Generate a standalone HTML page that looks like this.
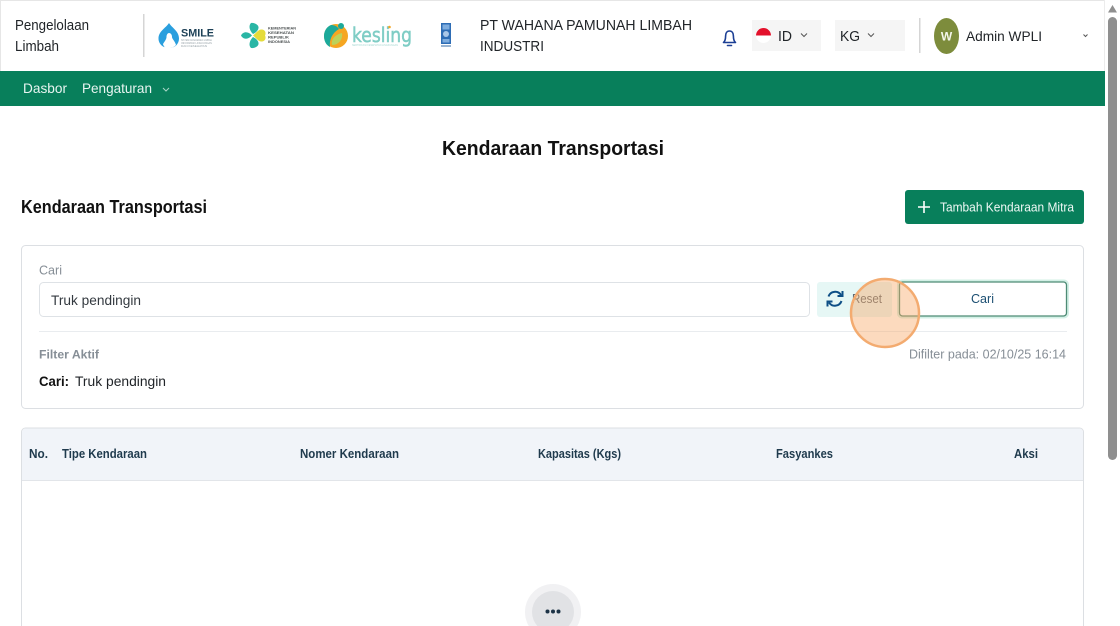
<!DOCTYPE html>
<html lang="id"><head><meta charset="utf-8"><title>Kendaraan Transportasi</title>
<style>
html,body{margin:0;padding:0;width:1120px;height:626px;overflow:hidden;background:#fff}
svg{display:block;position:absolute;left:0;top:0}
text{font-family:"Liberation Sans",sans-serif}
</style></head><body>
<svg width="1120" height="626" viewBox="0 0 1120 626" xmlns="http://www.w3.org/2000/svg">
<defs><filter id="soft" x="-5%" y="-5%" width="110%" height="110%"><feGaussianBlur stdDeviation="0.35"/></filter></defs>
<rect width="1120" height="626" fill="#fff"/>
<!-- header -->
<rect x="0" y="0" width="1105" height="1" fill="#e6e6e6"/>
<rect x="0" y="0" width="1" height="71" fill="#e6e6e6"/>
<rect x="1104" y="0" width="1" height="71" fill="#ececec"/>
<rect x="0" y="71" width="1105" height="35" fill="#087f5b"/>
<text x="15" y="30" font-size="14.5" fill="#212529" textLength="74" lengthAdjust="spacingAndGlyphs">Pengelolaan</text>
<text x="15" y="51" font-size="14.5" fill="#212529" textLength="44" lengthAdjust="spacingAndGlyphs">Limbah</text>
<rect x="143" y="14" width="1.5" height="43" fill="#d5d5d5"/>
<g filter="url(#soft)">
<!-- SMILE logo -->
<path d="M169 23 C172 28 179 31 179 38.500 C179 44 175 48 169 48 C163 48 158.500 44 158.500 38.500 C158.500 31 166 28 169 23Z" fill="#2a9fde"/>
<path d="M169 33 C171 33 172 35 172 37 C172 39 175 41 176 45 C174 47 172 48 170 48 L165 48 C164 46 163 45 163 44 C165 41 166.500 39 166.500 37 C166.500 35 167.500 33 169 33Z" fill="#fff"/>
<text x="181" y="36.500" font-size="11" font-weight="700" fill="#1d3f56" textLength="33" lengthAdjust="spacingAndGlyphs">SMILE</text>
<text x="181" y="41" font-size="2.600" fill="#9aa5ab" textLength="31" lengthAdjust="spacingAndGlyphs">SISTEM MANAJEMEN LIMBAH</text>
<text x="181" y="44" font-size="2.600" fill="#9aa5ab" textLength="31" lengthAdjust="spacingAndGlyphs">INFORMASI LINGKUNGAN</text>
<text x="181" y="47" font-size="2.600" fill="#9aa5ab" textLength="26" lengthAdjust="spacingAndGlyphs">DAN KESEHATAN</text>
<!-- Kemenkes logo -->
<path d="M251 23 C255 22.500 259 25 258.500 28 C258 31 255 33 253 34 C250 31 248 26 251 23Z" fill="#2cb6a5"/>
<path d="M251 48 C255 48.500 259 46 258.500 43 C258 40 255 38 253 37 C250 40 248 45 251 48Z" fill="#2cb6a5"/>
<path d="M241 35.500 C243 31.500 248 31 252 35.500 C248 40 243 39.500 241 35.500Z" fill="#2cb6a5"/>
<path d="M253 35.500 C256 33 258 30 261 29.500 C265 29 266.500 33 265 35.500 C266.500 38 265 42 261 41.500 C258 41 256 38 253 35.500Z" fill="#e5dc3a"/>
<text x="268" y="29.500" font-size="3.600" font-weight="700" fill="#4a4f50" textLength="28" lengthAdjust="spacingAndGlyphs">KEMENTERIAN</text>
<text x="268" y="34" font-size="3.600" font-weight="700" fill="#4a4f50" textLength="26" lengthAdjust="spacingAndGlyphs">KESEHATAN</text>
<text x="268" y="38.500" font-size="3.600" font-weight="700" fill="#4a4f50" textLength="21" lengthAdjust="spacingAndGlyphs">REPUBLIK</text>
<text x="268" y="43" font-size="3.600" font-weight="700" fill="#4a4f50" textLength="22" lengthAdjust="spacingAndGlyphs">INDONESIA</text>
<!-- kesling logo -->
<circle cx="336" cy="36" r="12" fill="#f5a623"/>
<path d="M331 25 C326 27 324 32 324 36 C324 41 326 45 330 47 C329 40 332 33 339 29 C337 26 334 25 331 25Z" fill="#1aa99a"/>
<path d="M332 45 C331 40 334 35 342 33 C343 39 339 45 332 45Z" fill="#bcd25a"/>
<circle cx="341" cy="26" r="3" fill="#1aa99a"/>
<text x="352" y="42" font-size="20" font-family="DejaVu Sans" fill="#7fcdc5" stroke="#7fcdc5" stroke-width=".5" textLength="60" lengthAdjust="spacingAndGlyphs" style='font-family:"DejaVu Sans",sans-serif'>kesling</text>
<circle cx="389.500" cy="27" r="1.300" fill="#f5a623"/>
<text x="352" y="46" font-size="2.400" fill="#a8d8d3" textLength="46" lengthAdjust="spacingAndGlyphs">SERTIFIKASI KESEHATAN LINGKUNGAN</text>
<!-- UNDP -->
<rect x="441" y="23" width="10" height="21" fill="#2d6db5"/>
<rect x="442.500" y="24.500" width="7" height="5" fill="#7fadde"/>
<circle cx="446" cy="34" r="3" fill="#a9c7e8"/>
<rect x="442.500" y="39" width="7" height="3.500" fill="#7fadde"/>
<rect x="441" y="45" width="10" height="2" fill="#9ab5d2"/>
</g>
<text x="480" y="30" font-size="14.500" fill="#212529" textLength="212" lengthAdjust="spacingAndGlyphs">PT WAHANA PAMUNAH LIMBAH</text>
<text x="480" y="51" font-size="14.500" fill="#212529" textLength="64" lengthAdjust="spacingAndGlyphs">INDUSTRI</text>
<!-- bell -->
<path d="M723.500 42.500 C725.300 41 725.600 39 725.600 36 C725.600 33 727 31 729.500 31 C732 31 733.400 33 733.400 36 C733.400 39 733.700 41 735.500 42.500 Z" fill="none" stroke="#1c3f94" stroke-width="1.600" stroke-linejoin="round"/>
<path d="M727.500 45.500 H731.500" stroke="#1c3f94" stroke-width="1.600" stroke-linecap="round"/>
<!-- ID chip -->
<rect x="752" y="20" width="69" height="31" fill="#f5f5f5"/>
<circle cx="763.500" cy="35.500" r="7.500" fill="#fff"/>
<path d="M756 35.500 A7.500 7.500 0 0 1 771 35.500Z" fill="#e3112b"/>
<text x="778" y="41" font-size="14.500" fill="#212529" textLength="14" lengthAdjust="spacingAndGlyphs">ID</text>
<path d="M801 33.500 L804 36.500 L807 33.500" fill="none" stroke="#555" stroke-width="1"/>
<!-- KG chip -->
<rect x="835" y="20" width="70" height="31" fill="#f5f5f5"/>
<text x="840" y="41" font-size="14.500" fill="#212529" textLength="20" lengthAdjust="spacingAndGlyphs">KG</text>
<path d="M868 33.500 L871 36.500 L874 33.500" fill="none" stroke="#555" stroke-width="1"/>
<rect x="919" y="18" width="1.500" height="35" fill="#d5d5d5"/>
<!-- avatar -->
<ellipse cx="946.500" cy="36" rx="12.500" ry="18" fill="#7d8c3c"/>
<text x="946.500" y="40.500" font-size="12" font-weight="700" fill="#f4f6ea" text-anchor="middle">W</text>
<text x="966" y="41" font-size="14" fill="#212529" textLength="76" lengthAdjust="spacingAndGlyphs">Admin WPLI</text>
<path d="M1083.500 34.500 L1085.500 36.500 L1087.500 34.500" fill="none" stroke="#555" stroke-width="1"/>
<!-- nav -->
<text x="23" y="93" font-size="14" fill="#e8f5f1" textLength="44" lengthAdjust="spacingAndGlyphs">Dasbor</text>
<text x="82" y="93" font-size="14" fill="#e8f5f1" textLength="70" lengthAdjust="spacingAndGlyphs">Pengaturan</text>
<path d="M163 88 L166 91 L169 88" fill="none" stroke="#a9d6c7" stroke-width="1"/>
<!-- titles -->
<text x="442" y="155" font-size="20" font-weight="700" fill="#111" textLength="222" lengthAdjust="spacingAndGlyphs">Kendaraan Transportasi</text>
<text x="21" y="213" font-size="18" font-weight="700" fill="#111" textLength="186" lengthAdjust="spacingAndGlyphs">Kendaraan Transportasi</text>
<rect x="905" y="190" width="179" height="34" rx="3" fill="#087f5b"/>
<path d="M924 201 V213 M918 207 H930" stroke="#fff" stroke-width="1.600" fill="none"/>
<text x="940" y="211.500" font-size="12.500" fill="#eef8f5" textLength="134" lengthAdjust="spacingAndGlyphs">Tambah Kendaraan Mitra</text>
<!-- filter card -->
<rect x="21.500" y="245.500" width="1062" height="163" rx="4" fill="#fff" stroke="#dcdfe3"/>
<text x="39" y="274.500" font-size="12.500" fill="#868e96" textLength="23" lengthAdjust="spacingAndGlyphs">Cari</text>
<rect x="39.500" y="282.500" width="770" height="34" rx="4" fill="#fff" stroke="#dee2e6"/>
<text x="51" y="305" font-size="14" fill="#343a40" textLength="90" lengthAdjust="spacingAndGlyphs">Truk pendingin</text>
<rect x="817" y="282" width="75" height="35" rx="3" fill="#e6f7f5"/>
<path d="M828.500 296.500 A7 7 0 0 1 841 295 M842.500 291 V296 H837.500 M841.500 301 A7 7 0 0 1 829 302.500 M827.500 306.500 V301.500 H832.500" fill="none" stroke="#0e4f86" stroke-width="2"/>
<text x="852" y="303" font-size="12.500" fill="#5f6b72" textLength="30" lengthAdjust="spacingAndGlyphs">Reset</text>
<rect x="898" y="280.500" width="170" height="37" rx="4" fill="none" stroke="#d3f0e6" stroke-width="2"/>
<rect x="899.500" y="282" width="167" height="34" rx="3" fill="#fff" stroke="#4d8b75" stroke-width="1.300"/>
<text x="971" y="303" font-size="12.500" fill="#1c4f72" textLength="23" lengthAdjust="spacingAndGlyphs">Cari</text>
<rect x="39" y="331" width="1028" height="1" fill="#e9ecef"/>
<text x="39" y="358.500" font-size="12" font-weight="700" fill="#868e96" textLength="60" lengthAdjust="spacingAndGlyphs">Filter Aktif</text>
<text x="909" y="358.500" font-size="12.500" fill="#868e96" textLength="157" lengthAdjust="spacingAndGlyphs">Difilter pada: 02/10/25 16:14</text>
<text x="39" y="386" font-size="14" font-weight="700" fill="#111" textLength="30" lengthAdjust="spacingAndGlyphs">Cari:</text>
<text x="75" y="386" font-size="14" fill="#212529" textLength="91" lengthAdjust="spacingAndGlyphs">Truk pendingin</text>
<!-- table -->
<path d="M21.500 626 V432 A4 4 0 0 1 25.500 428 H1079.500 A4 4 0 0 1 1083.500 432 V626" fill="#fff" stroke="#dcdfe3"/>
<path d="M22 480 V432 A4 4 0 0 1 26 428.500 H1079 A4 4 0 0 1 1083 432 V480Z" fill="#f1f4f9"/>
<rect x="22" y="480" width="1061" height="1" fill="#e2e5e9"/>
<g font-size="12.500" font-weight="700" fill="#1f3a4d">
<text x="29" y="458" textLength="19" lengthAdjust="spacingAndGlyphs">No.</text>
<text x="62" y="458" textLength="85" lengthAdjust="spacingAndGlyphs">Tipe Kendaraan</text>
<text x="300" y="458" textLength="99" lengthAdjust="spacingAndGlyphs">Nomer Kendaraan</text>
<text x="538" y="458" textLength="83" lengthAdjust="spacingAndGlyphs">Kapasitas (Kgs)</text>
<text x="776" y="458" textLength="57" lengthAdjust="spacingAndGlyphs">Fasyankes</text>
<text x="1014" y="458" textLength="24" lengthAdjust="spacingAndGlyphs">Aksi</text>
</g>
<!-- spinner -->
<circle cx="553" cy="612" r="28" fill="#f1f1f3"/>
<circle cx="553" cy="612" r="21" fill="#e1e2e5"/>
<circle cx="547.500" cy="611.500" r="2" fill="#1d3346"/>
<circle cx="553" cy="611.500" r="2" fill="#1d3346"/>
<circle cx="558.500" cy="611.500" r="2" fill="#1d3346"/>
<!-- click highlight -->
<circle cx="885" cy="313" r="34" fill="#f7a765" fill-opacity=".42" stroke="#f3ab70" stroke-width="2.500"/>
<!-- scrollbar -->
<path d="M1112.500 5 L1117 12.500 H1108Z" fill="#8f8f8f"/>
<rect x="1108" y="17" width="9" height="443" rx="4.500" fill="#8f8f8f"/>
</svg>
</body></html>
